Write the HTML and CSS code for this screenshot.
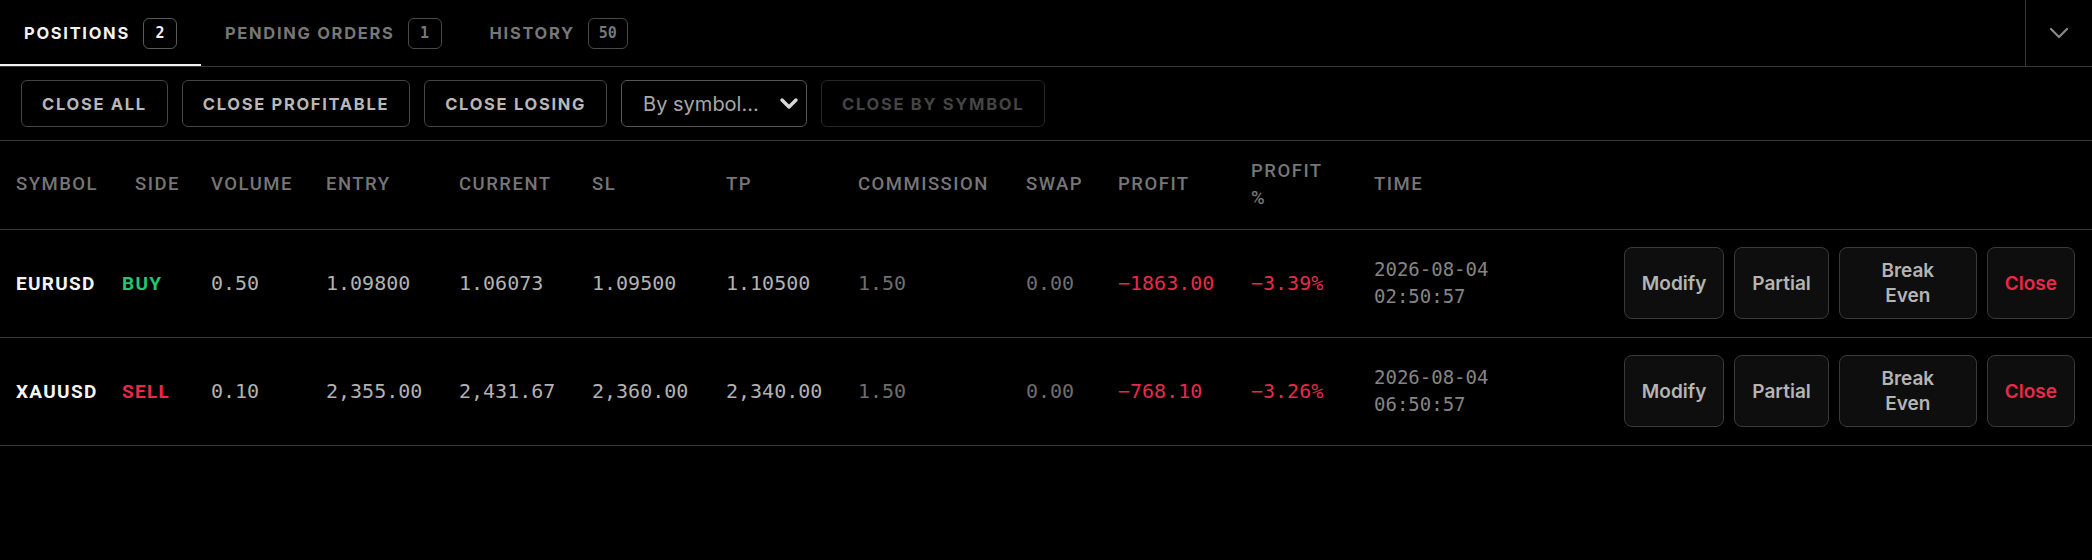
FILE: index.html
```html
<!DOCTYPE html>
<html lang="en">
<head>
<meta charset="utf-8">
<title>Positions</title>
<link rel="stylesheet" href="styles.css">
</head>
<body>
<div class="panel">
  <div class="tabbar">
    <div class="tabs">
      <div class="tab active"><span class="tab-label">POSITIONS</span><span class="badge">2</span></div>
      <div class="tab"><span class="tab-label">PENDING ORDERS</span><span class="badge">1</span></div>
      <div class="tab"><span class="tab-label">HISTORY</span><span class="badge">50</span></div>
    </div>
    <div class="collapse">
      <svg width="20" height="12" viewBox="0 0 20 12"><path d="M2 2 L10 10 L18 2" fill="none" stroke="#8a8a8a" stroke-width="2.2" stroke-linecap="round" stroke-linejoin="round"/></svg>
    </div>
  </div>

  <div class="toolbar">
    <button class="tool-btn">CLOSE ALL</button>
    <button class="tool-btn">CLOSE PROFITABLE</button>
    <button class="tool-btn">CLOSE LOSING</button>
    <div class="select">
      <span class="select-text">By symbol...</span>
      <svg width="20" height="14" viewBox="0 0 20 14"><path d="M3 3 L10 10 L17 3" fill="none" stroke="#d8d8d8" stroke-width="3.4" stroke-linecap="round" stroke-linejoin="round"/></svg>
    </div>
    <button class="tool-btn disabled">CLOSE BY SYMBOL</button>
  </div>

  <table class="grid">
    <colgroup>
      <col class="c-symbol"><col class="c-side"><col class="c-volume"><col class="c-entry"><col class="c-current"><col class="c-sl"><col class="c-tp"><col class="c-comm"><col class="c-swap"><col class="c-profit"><col class="c-pct"><col class="c-time"><col class="c-actions">
    </colgroup>
    <thead>
      <tr>
        <th>SYMBOL</th><th>SIDE</th><th>VOLUME</th><th>ENTRY</th><th>CURRENT</th><th>SL</th><th>TP</th><th>COMMISSION</th><th>SWAP</th><th>PROFIT</th><th>PROFIT<br>%</th><th>TIME</th><th></th>
      </tr>
    </thead>
    <tbody>
      <tr>
        <td class="sym">EURUSD</td>
        <td class="side buy">BUY</td>
        <td class="num">0.50</td>
        <td class="num">1.09800</td>
        <td class="num">1.06073</td>
        <td class="num">1.09500</td>
        <td class="num">1.10500</td>
        <td class="num dim">1.50</td>
        <td class="num dim">0.00</td>
        <td class="num neg">−1863.00</td>
        <td class="num neg">−3.39%</td>
        <td class="time"><span>2026-08-04</span><span>02:50:57</span></td>
        <td class="actions">
          <div class="act-group">
            <button class="act-btn">Modify</button>
            <button class="act-btn">Partial</button>
            <button class="act-btn act-wide">Break Even</button>
            <button class="act-btn act-close">Close</button>
          </div>
        </td>
      </tr>
      <tr>
        <td class="sym">XAUUSD</td>
        <td class="side sell">SELL</td>
        <td class="num">0.10</td>
        <td class="num">2,355.00</td>
        <td class="num">2,431.67</td>
        <td class="num">2,360.00</td>
        <td class="num">2,340.00</td>
        <td class="num dim">1.50</td>
        <td class="num dim">0.00</td>
        <td class="num neg">−768.10</td>
        <td class="num neg">−3.26%</td>
        <td class="time"><span>2026-08-04</span><span>06:50:57</span></td>
        <td class="actions">
          <div class="act-group">
            <button class="act-btn">Modify</button>
            <button class="act-btn">Partial</button>
            <button class="act-btn act-wide">Break Even</button>
            <button class="act-btn act-close">Close</button>
          </div>
        </td>
      </tr>
    </tbody>
  </table>
</div>
</body>
</html>
```

FILE: styles.css
```css
* { box-sizing: border-box; }

html, body {
  margin: 0;
  padding: 0;
  background: #000;
  color: #ccc;
  font-family: "Inter", "Noto Sans", sans-serif;
}

.panel {
  width: 2092px;
  background: #000;
}

/* Tabs */
.tabbar {
  display: flex;
  height: 67px;
  border-bottom: 1px solid #383838;
}

.tabs {
  display: flex;
}

.tab {
  display: flex;
  align-items: center;
  gap: 13px;
  height: 66px;
  padding: 2px 24px 0;
  border-bottom: 2px solid transparent;
  color: #777;
}

.tab.active {
  color: #f2f2f2;
  border-bottom-color: #f2f2f2;
}

.tab-label {
  font-family: "Inter", sans-serif;
  font-weight: 700;
  font-size: 16.5px;
  letter-spacing: 1.7px;
}

.badge {
  min-width: 34px;
  height: 31px;
  padding: 0 10px;
  border: 1px solid #4a4a4a;
  border-radius: 6px;
  display: flex;
  align-items: center;
  justify-content: center;
  font-family: "DejaVu Sans Mono", monospace;
  font-weight: 700;
  font-size: 15px;
  color: #777;
}

.tab.active .badge {
  color: #f2f2f2;
  border-color: #5a5a5a;
}

.collapse {
  margin-left: auto;
  width: 67px;
  border-left: 1px solid #383838;
  display: flex;
  align-items: center;
  justify-content: center;
}

/* Toolbar */
.toolbar {
  display: flex;
  align-items: center;
  gap: 14px;
  padding: 13px 21px;
  border-bottom: 1px solid #383838;
}

.tool-btn {
  height: 47px;
  padding: 0 20px;
  background: #000;
  border: 1px solid #444;
  border-radius: 6px;
  color: #b8b8b8;
  font-family: "Inter", sans-serif;
  font-weight: 700;
  font-size: 16.5px;
  letter-spacing: 1.7px;
}

.tool-btn.disabled {
  border-color: #262626;
  color: #454545;
}

.select {
  display: flex;
  align-items: center;
  justify-content: space-between;
  width: 186px;
  height: 47px;
  padding: 0 7px 0 21px;
  border: 1px solid #555;
  border-radius: 6px;
  color: #a8a8a8;
  font-family: "Inter", sans-serif;
  font-size: 20px;
}

/* Table */
.grid {
  width: 2092px;
  border-collapse: collapse;
  table-layout: fixed;
}

.c-symbol { width: 119px; }
.c-side { width: 76px; }
.c-volume { width: 115px; }
.c-entry { width: 133px; }
.c-current { width: 133px; }
.c-sl { width: 134px; }
.c-tp { width: 132px; }
.c-comm { width: 168px; }
.c-swap { width: 92px; }
.c-profit { width: 133px; }
.c-pct { width: 123px; }
.c-time { width: 247px; }
.c-actions { width: 487px; }

.grid th {
  height: 88px;
  padding: 0 16px;
  text-align: left;
  vertical-align: middle;
  font-family: "Roboto", sans-serif;
  font-weight: 500;
  font-size: 18.5px;
  line-height: 27px;
  letter-spacing: 1.5px;
  color: #767676;
  border-bottom: 1px solid #383838;
}

.grid td {
  height: 108px;
  padding: 0 16px;
  vertical-align: middle;
  border-bottom: 1px solid #383838;
  white-space: nowrap;
}

.sym {
  font-family: "Roboto", sans-serif;
  font-weight: 700;
  font-size: 19px;
  letter-spacing: 1.3px;
  color: #f4f4f4;
}

.grid td.side {
  padding-left: 3px;
  font-family: "Roboto", sans-serif;
  font-weight: 700;
  font-size: 19px;
  letter-spacing: 1.3px;
}

.buy { color: #22c672; }
.sell { color: #e8294a; }

.num {
  font-family: "DejaVu Sans Mono", monospace;
  font-size: 20px;
  color: #b2b2b2;
}

.num.dim { color: #6e6e6e; }
.num.neg { color: #e8294a; }

.time {
  font-family: "DejaVu Sans Mono", monospace;
  font-size: 19px;
  line-height: 27px;
  color: #858585;
}

.time span { display: block; }

.grid td.actions { padding: 0 17px 0 16px; }

.act-group {
  display: flex;
  justify-content: flex-end;
  gap: 10px;
}

.act-btn {
  height: 72px;
  padding: 0 17px;
  background: #0e0e0e;
  border: 1px solid #3a3a3a;
  border-radius: 8px;
  color: #b4b4b4;
  font-family: "Inter", sans-serif;
  font-weight: 600;
  font-size: 19px;
  line-height: 25px;
  white-space: normal;
}

.act-wide { width: 138px; padding: 0 38px; }

.act-close { color: #e8294a; }
```
